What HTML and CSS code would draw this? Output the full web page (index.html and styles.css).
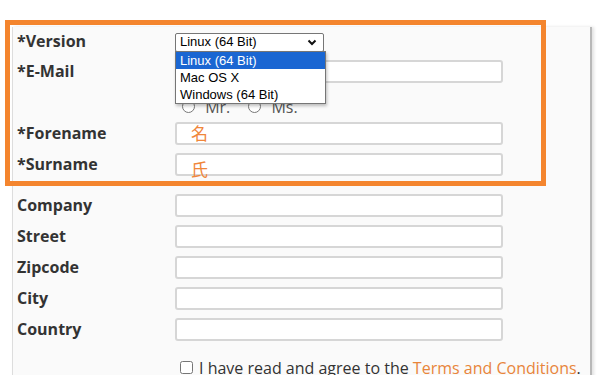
FILE: index.html
```html
<!DOCTYPE html>
<html lang="en">
<head>
    <meta charset="UTF-8">
    <meta name="viewport" content="width=device-width, initial-scale=1.0">
    <title>Download</title>
    <link rel="stylesheet" href="styles.css">
</head>
<body>
    <div class="panel">
        <form class="order-form">
            <div class="row">
                <label class="label">*Version</label>
                <div class="select-wrap">
                    <div class="select-box">
                        <span>Linux (64 Bit)</span>
                        <svg width="10" height="7" viewBox="0 0 10 7"><path d="M1.5 1.5 L5 5 L8.5 1.5" fill="none" stroke="#111" stroke-width="2"/></svg>
                    </div>
                    <ul class="select-list">
                        <li class="selected">Linux (64 Bit)</li>
                        <li>Mac OS X</li>
                        <li>Windows (64 Bit)</li>
                    </ul>
                </div>
            </div>
            <div class="row">
                <label class="label">*E-Mail</label>
                <input type="text" class="field">
            </div>
            <div class="row">
                <span class="label"></span>
                <div class="radios">
                    <label><input type="radio" name="title"> Mr.</label>
                    <label><input type="radio" name="title"> Ms.</label>
                </div>
            </div>
            <div class="row">
                <label class="label">*Forename</label>
                <div class="field-wrap">
                    <input type="text" class="field">
                    <span class="note note-forename">名</span>
                </div>
            </div>
            <div class="row">
                <label class="label">*Surname</label>
                <div class="field-wrap">
                    <input type="text" class="field">
                    <span class="note note-surname">氏</span>
                </div>
            </div>

            <div class="row group-start">
                <label class="label">Company</label>
                <input type="text" class="field">
            </div>
            <div class="row">
                <label class="label">Street</label>
                <input type="text" class="field">
            </div>
            <div class="row">
                <label class="label">Zipcode</label>
                <input type="text" class="field">
            </div>
            <div class="row">
                <label class="label">City</label>
                <input type="text" class="field">
            </div>
            <div class="row">
                <label class="label">Country</label>
                <input type="text" class="field">
            </div>

            <div class="terms">
                <input type="checkbox" id="terms">
                <label for="terms">I have read and agree to the <a href="#">Terms and Conditions</a>.</label>
            </div>
        </form>
    </div>

    <!-- highlight around required fields -->
    <div class="highlight"></div>
</body>
</html>
```

FILE: styles.css
```css
body {
    font-family: "Open Sans", "Noto Sans CJK JP", sans-serif;
    background-color: #ffffff;
    color: #333333;
    margin: 0;
    padding: 0;
}
.panel {
    margin: 27px 0 0 12px;
    width: 573px;
    min-height: 360px;
    background-color: #fafafa;
    border-left: 1px solid #dddddd;
    border-right: 2px solid #b8b8b8;
    box-shadow: 2px 0 3px rgba(0, 0, 0, 0.12);
    padding-left: 4px;
}
.row {
    display: flex;
    align-items: center;
    height: 31px;
    line-height: 20px;
}
.row:first-child {
    height: 29px;
}
.group-start {
    margin-top: 10px;
}
.label {
    width: 158px;
    font-size: 16px;
    font-weight: 700;
    color: #333333;
    flex-shrink: 0;
    margin-top: -1px;
}
.field {
    width: 328px;
    height: 23px;
    box-sizing: border-box;
    border: 2px solid #d6d6d6;
    border-radius: 3px;
    background-color: #ffffff;
    margin: 0;
}
.field-wrap {
    position: relative;
    display: flex;
}
.note {
    position: absolute;
    left: 16px;
    color: #f0863a;
    font-family: "Noto Sans CJK JP", sans-serif;
    font-size: 17px;
    line-height: 20px;
}
.note-forename {
    top: 1px;
}
.note-surname {
    top: 6px;
}
.select-wrap {
    position: relative;
    margin-top: 1px;
}
.select-box {
    width: 149px;
    height: 19px;
    box-sizing: border-box;
    border: 1px solid #767676;
    border-radius: 2px;
    background-color: #ffffff;
    display: flex;
    align-items: center;
    justify-content: space-between;
    padding: 0 6px 0 4px;
    font-family: "Liberation Sans", Arial, sans-serif;
    font-size: 13px;
    color: #000000;
}
.select-list {
    position: absolute;
    top: 18px;
    left: 0;
    width: 151px;
    box-sizing: border-box;
    margin: 0;
    padding: 0;
    list-style: none;
    background-color: #ffffff;
    border: 1px solid #767676;
    box-shadow: 1px 2px 3px rgba(0, 0, 0, 0.25);
    font-family: "Liberation Sans", Arial, sans-serif;
    font-size: 13px;
    color: #000000;
    z-index: 2;
}
.select-list li {
    height: 17px;
    line-height: 17px;
    padding-left: 4px;
}
.select-list .selected {
    background-color: #1a66d2;
    color: #ffffff;
}
.radios {
    display: flex;
    gap: 18px;
    padding-left: 7px;
    margin-top: 8px;
    font-size: 16px;
    color: #555555;
}
.radios input {
    margin: 0 6px 0 0;
}
.terms {
    margin-top: 7px;
    height: 31px;
    display: flex;
    align-items: center;
    padding-left: 163px;
    font-size: 16px;
    color: #333333;
}
.terms input {
    margin: 0 6px 0 0;
    width: 13px;
    height: 13px;
}
.terms a {
    color: #e8853a;
    text-decoration: none;
}
.highlight {
    position: absolute;
    left: 5px;
    top: 20px;
    width: 531px;
    height: 156px;
    border: 5px solid #f4852e;
    pointer-events: none;
}
```
